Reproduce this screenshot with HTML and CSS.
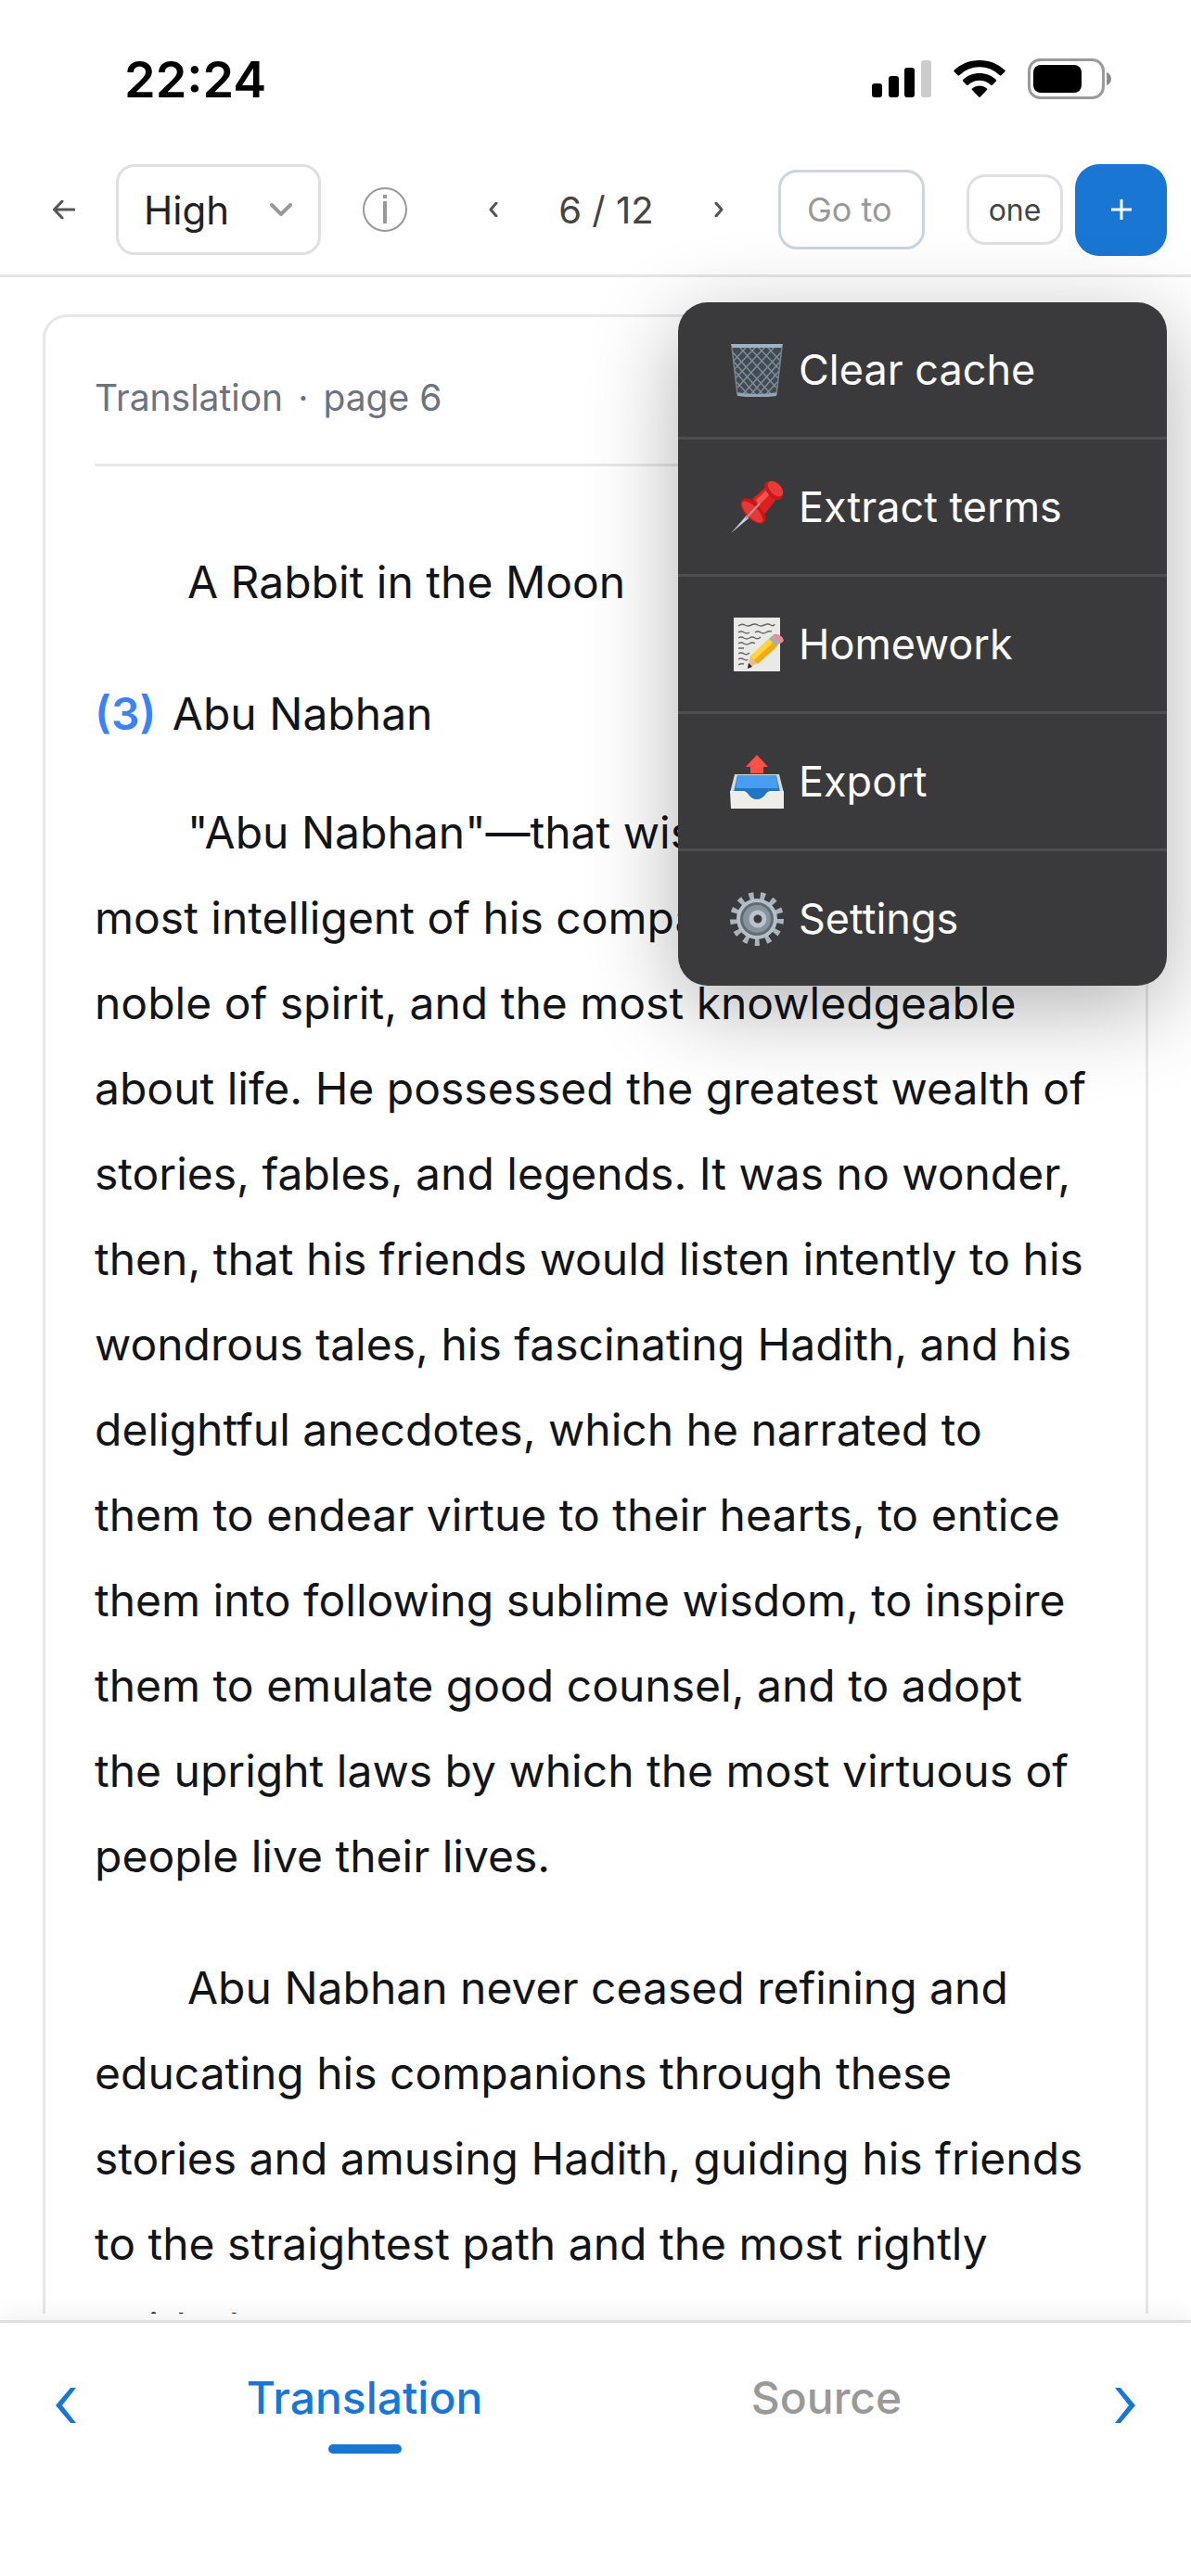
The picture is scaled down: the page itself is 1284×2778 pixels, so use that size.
FILE: index.html
```
<!DOCTYPE html>
<html lang="en">
<head>
    <meta charset="UTF-8">
    <title>Reader</title>
    <link rel="stylesheet" href="styles.css">
</head>
<body>

    <div class="status-bar">
        <span class="clock">22:24</span>
        <div class="status-icons">
            <svg class="signal" viewBox="0 0 64 40">
                <rect x="0" y="25" width="11" height="15" rx="3"/>
                <rect x="18" y="17" width="11" height="23" rx="3"/>
                <rect x="35" y="8" width="11" height="32" rx="3"/>
                <rect x="53" y="0" width="11" height="40" rx="3" fill="#cccccc"/>
            </svg>
            <svg class="wifi" viewBox="0 0 56 40">
                <path d="M28 0C17.5 0 7.500 4 0.600 10.800q-0.600 .7 0 1.400l4 4q.8 .7 1.600 0a31 31 0 0 1 43.600 0q.8 .7 1.600 0l4-4q.6-.7 0-1.400C48.500 4 38.500 0 28 0z"/>
                <path d="M28 14c-6.800 0-13.200 2.600-17.900 7q-.7 .8 0 1.500l4.200 4.200q.7 .6 1.500 0a17.700 17.700 0 0 1 24.400 0q.8 .6 1.500 0l4.200-4.200q.7-.7 0-1.500c-4.700-4.400-11.100-7-17.900-7z"/>
                <path d="M28 27.500c-3 0-5.800 1.100-8 3q-.7 .7 0 1.500l7.200 7.500q.8 .7 1.600 0L36 32q.7-.8 0-1.500c-2.200-1.900-5-3-8-3z"/>
            </svg>
            <svg class="battery" viewBox="0 0 90 44">
                <rect x="1.500" y="1.500" width="80" height="41" rx="12" fill="none" stroke="#9a9a9a" stroke-width="3"/>
                <rect x="6" y="7" width="52" height="30" rx="8"/>
                <path d="M85 15c3 1 5 3.500 5 7s-2 6-5 7z" fill="#8c8c8c"/>
            </svg>
        </div>
    </div>

    <header class="toolbar">
        <button class="icon-btn back" aria-label="Back">
            <svg width="24" height="20" viewBox="0 0 24 20"><path d="M10 1L1.500 10l8.500 9M1.500 10H23"/></svg>
        </button>
        <div class="quality">
            <select aria-label="Quality">
                <option>High</option>
                <option>Low</option>
            </select>
            <svg width="26" height="16" viewBox="0 0 26 16"><path d="M3 3l10 10L23 3"/></svg>
        </div>
        <button class="icon-btn info" aria-label="Info">
            <svg width="48" height="48" viewBox="0 0 48 48">
                <circle cx="24" cy="24" r="23"/>
                <path d="M24 15v24M24 8v4" stroke-width="4"/>
            </svg>
        </button>
        <button class="icon-btn prev" aria-label="Previous page">
            <svg width="10" height="16" viewBox="0 0 10 16"><path d="M8 1L2 8l6 7"/></svg>
        </button>
        <span class="page-count">6 / 12</span>
        <button class="icon-btn next" aria-label="Next page">
            <svg width="10" height="16" viewBox="0 0 10 16"><path d="M2 1l6 7-6 7"/></svg>
        </button>
        <input class="goto" type="text" placeholder="Go to" aria-label="Go to page">
        <div class="actions">
            <button class="mode">one</button>
            <button class="add" aria-label="Menu">
                <svg width="22" height="22" viewBox="0 0 22 22"><path d="M11 0v22M0 11h22"/></svg>
            </button>
        </div>

        <div class="menu">
            <button>
                <svg class="emoji" viewBox="0 0 58 58">
                    <path d="M2 3L8 55q21 5 42 0L56 3z" fill="#434a50"/>
                    <g stroke="#7d8d9b" stroke-width="1.500" fill="none">
                        <path d="M3 10l42 46M4 20l32 36M5 30l24 27M7 42l13 14M10 4l40 44M20 4l32 34M30 4l23 24M40 4l14 15"/>
                        <path d="M55 10L13 56M54 20L22 56M53 30L29 57M51 42L38 56M48 4L8 48M38 4L6 38M28 4L5 28M18 4L4 19"/>
                    </g>
                    <path d="M1 1h56l-1 4H2z" fill="#9eb2c6"/>
                    <path d="M7 53q22 4 44 0l-1 4q-21 3-42 0z" fill="#93a4b5"/>
                    <path d="M2 4l6 52M56 4l-6 52" stroke="#77838e" stroke-width="1.500"/>
                </svg>
                Clear cache
            </button>
            <button>
                <svg class="emoji" viewBox="0 0 58 58">
                    <path d="M22 33L1 57l25-21z" fill="#b9d2e2"/>
                    <ellipse cx="25" cy="33" rx="17" ry="9" transform="rotate(46 25 33)" fill="#c8161b"/>
                    <path d="M24 20l14-12 12 12-12 16z" fill="#dc2022"/>
                    <path d="M28 21l13-12 4 4-14 14z" fill="#f2534c"/>
                    <ellipse cx="24" cy="34" rx="15" ry="6" transform="rotate(46 24 34)" fill="#e23a38"/>
                    <ellipse cx="47" cy="11" rx="12" ry="7" transform="rotate(46 47 11)" fill="#c9181c"/>
                    <ellipse cx="49" cy="9" rx="10" ry="6" transform="rotate(46 49 9)" fill="#ea3a36"/>
                    <path d="M32 25L17 41" stroke="#d58a90" stroke-width="2"/>
                </svg>
                Extract terms
            </button>
            <button>
                <svg class="emoji" viewBox="0 0 58 58">
                    <rect x="4" y="0" width="50" height="58" fill="#e9e9e7"/>
                    <path d="M9 9q4-3 7-1t7 0 7 0 7 0 7 0 4-1M9 16q3-2 6 0t6 0M27 16q3-2 6 0t6 0 6-1M9 22q3-2 6 0t6 0 6 0 6-1M9 28q3-2 6 0t6 0 6 0M9 33h6M9 39q3-2 6 0t6-1M9 45q3-2 6 0t4 0M9 51q3-2 6-1" stroke="#666" stroke-width="1.500" fill="none"/>
                    <path d="M19 55l3-14 8 8z" fill="#e9bd83"/>
                    <path d="M19 55l1-6 4 4z" fill="#222"/>
                    <path d="M22 42L43 22l8 9-21 19z" fill="#f0ac12"/>
                    <path d="M22 42L43 22l4 4-21 20z" fill="#ffd53d"/>
                    <path d="M42 23l4-4 8 8-4 4z" fill="#a8adb2"/>
                    <path d="M46 19q4-3 9 1t1 7l-2 1z" fill="#ea8a94"/>
                </svg>
                Homework
            </button>
            <button>
                <svg class="emoji" viewBox="0 0 58 58">
                    <path d="M5 21h48l5 20H0z" fill="#d9d8d3"/>
                    <path d="M8 22h42l4 18-14 11H18L4 40z" fill="#2176c4"/>
                    <path d="M8 22h42l2 14H6z" fill="#4a9bf2"/>
                    <path d="M0 39h15c5 1 6 9 14 9s9-8 14-9h15v19H1z" fill="#eeedea"/>
                    <path d="M29 0l12 13h-5v7H22v-7h-5z" fill="#fb5147"/>
                </svg>
                Export
            </button>
            <button>
                <svg class="emoji" viewBox="0 0 58 58">
                    <circle cx="29" cy="29" r="25" fill="none" stroke="#a9b3bc" stroke-width="8" stroke-dasharray="5 7.080"/>
                    <circle cx="29" cy="29" r="22" fill="#b4bfc9"/>
                    <circle cx="29" cy="29" r="18" fill="#626c74"/>
                    <circle cx="29" cy="29" r="15" fill="#87929b"/>
                    <circle cx="30" cy="29" r="7" fill="#3a3a3c" stroke="#b9c3cd" stroke-width="5"/>
                </svg>
                Settings
            </button>
        </div>
    </header>

    <main class="content">
        <article class="page-card">
            <div class="card-header"><span>Translation</span><span>·</span><span>page 6</span></div>
            <p>A Rabbit in the Moon</p>
            <h2><span class="note">(3)</span> Abu Nabhan</h2>
            <p>"Abu Nabhan"—that wise man, he was the most intelligent of his companions, the most noble of spirit, and the most knowledgeable about life. He possessed the greatest wealth of stories, fables, and legends. It was no wonder, then, that his friends would listen intently to his wondrous tales, his fascinating Hadith, and his delightful anecdotes, which he narrated to them to endear virtue to their hearts, to entice them into following sublime wisdom, to inspire them to emulate good counsel, and to adopt the upright laws by which the most virtuous of people live their lives.</p>
            <p>Abu Nabhan never ceased refining and educating his companions through these stories and amusing Hadith, guiding his friends to the straightest path and the most rightly guided</p>
        </article>
    </main>

    <nav class="bottom-bar">
        <button class="turn" aria-label="Previous">
            <svg width="24" height="40" viewBox="0 0 24 40"><path d="M17 1h6L8 20l15 19h-6L1 20z"/></svg>
        </button>
        <div class="tabs">
            <button class="tab active">Translation</button>
            <button class="tab">Source</button>
        </div>
        <button class="turn" aria-label="Next">
            <svg width="24" height="40" viewBox="0 0 24 40"><path d="M7 1H1l15 19L1 39h6l16-19z"/></svg>
        </button>
    </nav>

</body>
</html>
```
FILE: styles.css
```
* {
    box-sizing: border-box;
}

body {
    margin: 0;
    height: 100vh;
    display: flex;
    flex-direction: column;
    background: #fff;
    color: #111418;
    font-family: Inter, "Liberation Sans", sans-serif;
    overflow: hidden;
}

button, input, select {
    font-family: inherit;
    margin: 0;
}

button {
    background: none;
    border: none;
    padding: 0;
    cursor: pointer;
}

svg {
    display: block;
    flex-shrink: 0;
}

.status-bar {
    display: flex;
    justify-content: space-between;
    align-items: center;
    height: 157px;
    padding: 13px 86px 0 134px;
}

.clock {
    color: #000;
    font-size: 54px;
    font-weight: 600;
}

.status-icons {
    display: flex;
    align-items: center;
    gap: 24px;
}

.signal {
    width: 64px;
    height: 40px;
}

.wifi {
    width: 56px;
    height: 40px;
}

.battery {
    width: 90px;
    height: 44px;
}

/* toolbar */
.toolbar {
    position: relative;
    display: flex;
    align-items: center;
    height: 142px;
    padding: 0 26px 1px;
    border-bottom: 3px solid #e5e5e5;
}

.icon-btn {
    display: flex;
    align-items: center;
    justify-content: center;
    height: 98px;
    width: 84px;
}

.icon-btn svg {
    fill: none;
    stroke: #555;
    stroke-width: 3;
    stroke-linecap: round;
    stroke-linejoin: round;
}

.back {
    width: 86px;
}

.quality {
    position: relative;
    margin-left: 13px;
}

.quality select {
    appearance: none;
    width: 221px;
    height: 98px;
    padding: 0 27px;
    border: 3px solid #e0e0e0;
    border-radius: 20px;
    background: #fff;
    color: #222;
    font-size: 42px;
}

.quality svg {
    position: absolute;
    right: 30px;
    top: 41px;
    fill: none;
    stroke: #999;
    stroke-width: 4;
    stroke-linecap: round;
    stroke-linejoin: round;
    pointer-events: none;
}

.info {
    width: 138px;
}

.info svg {
    stroke: #999;
    stroke-width: 2;
    stroke-linecap: butt;
}

.prev, .next {
    width: 96px;
}

.page-count {
    flex: 1;
    text-align: center;
    color: #444;
    font-size: 40px;
    white-space: nowrap;
}

.goto {
    width: 158px;
    height: 86px;
    margin-left: 16px;
    padding: 0 28px;
    border: 3px solid #cbd5e1;
    border-radius: 20px;
    font-size: 36px;
    background: #fff;
}

.goto::placeholder {
    color: #999;
    opacity: 1;
}

.actions {
    display: flex;
    align-items: center;
    gap: 13px;
    margin-left: 45px;
}

.mode {
    width: 104px;
    height: 76px;
    border: 3px solid #e0e0e0;
    border-radius: 20px;
    color: #444;
    font-size: 32px;
}

.add {
    display: flex;
    align-items: center;
    justify-content: center;
    width: 99px;
    height: 99px;
    border-radius: 26px;
    background: #1976d2;
}

.add svg {
    stroke: #fff;
    stroke-width: 3;
}

/* dropdown menu */
.menu {
    position: absolute;
    top: 169px;
    right: 26px;
    z-index: 10;
    width: 527px;
    border-radius: 32px;
    background: #3a3a3c;
    box-shadow: 0 24px 96px rgba(0, 0, 0, 0.3);
    overflow: hidden;
}

.menu button {
    display: flex;
    align-items: center;
    gap: 16px;
    width: 100%;
    height: 148px;
    padding: 0 56px;
    border-bottom: 3px solid #4e4e50;
    color: #fff;
    font-size: 45px;
}

.menu button:last-child {
    height: 145px;
    border-bottom: none;
}

.emoji {
    width: 58px;
    height: 58px;
}

/* page text */
.content {
    flex: 1;
    min-height: 0;
    margin-bottom: 7px;
    padding: 40px 46px 0;
    overflow: hidden;
}

.page-card {
    padding: 53px;
    border: 3px solid #e5e7eb;
    border-radius: 26px;
    font-size: 48px;
    line-height: 92px;
}

.card-header {
    display: flex;
    gap: 16px;
    padding-bottom: 37px;
    margin-bottom: 79px;
    border-bottom: 3px solid #e5e7eb;
    color: #6b7280;
    font-size: 39px;
    line-height: 68px;
}

.page-card p {
    margin: 0 0 50px;
    text-indent: 100px;
}

.page-card h2 {
    margin: 0 0 36px;
    font-size: 48px;
    font-weight: 400;
}

.note {
    margin-right: 4px;
    color: #3b82f6;
    font-weight: 600;
}

/* bottom tabs */
.bottom-bar {
    display: flex;
    align-items: flex-start;
    height: 276px;
    padding: 37px 26px 0;
    border-top: 3px solid #e0e0e0;
    box-shadow: 0 -6px 24px rgba(0, 0, 0, 0.06);
}

.turn {
    display: flex;
    align-items: center;
    justify-content: center;
    width: 90px;
    height: 104px;
}

.turn svg {
    fill: #1976d2;
}

.tabs {
    flex: 1;
    display: flex;
    align-items: flex-start;
    padding: 0 28px;
}

.tab {
    flex: 1;
    display: flex;
    flex-direction: column;
    align-items: center;
    gap: 20px;
    padding-top: 14px;
    color: #999;
    font-size: 48px;
    font-weight: 500;
    line-height: 60px;
}

.active {
    color: #1976d2;
}

.active::after {
    content: "";
    width: 79px;
    height: 10px;
    border-radius: 5px;
    background: #1976d2;
}
```
